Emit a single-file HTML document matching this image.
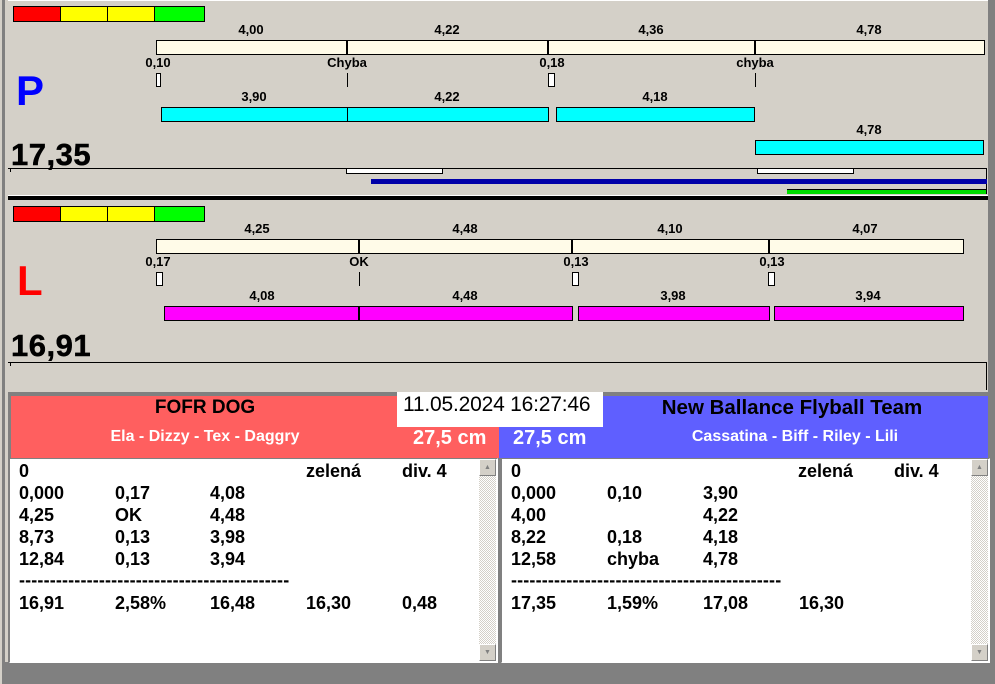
<!DOCTYPE html>
<html><head><meta charset="utf-8"><style>
*{margin:0;padding:0;box-sizing:border-box}
body{width:995px;height:684px;overflow:hidden;background:#808080;font-family:"Liberation Sans",Arial,sans-serif;position:relative}
.a{position:absolute}
.lb{position:absolute;font-size:13px;font-weight:bold;color:#000;transform:translateX(-50%);white-space:nowrap;line-height:14px}
.bar{position:absolute;border:1px solid #000}
.cr{background:#fffbe8}
.cy{background:#00ffff}
.mg{background:#ff00ff}
.sm{position:absolute;background:#fff;border:1px solid #000;width:7px;height:14px}
.tk{position:absolute;width:1px;height:14px;background:#000}
.vd{position:absolute;width:2px;background:#000}
.t{position:absolute;font-size:18px;font-weight:bold;line-height:22px;white-space:nowrap}
.sb{position:absolute;width:17px;background:repeating-conic-gradient(#fff 0 25%,#d4d0c8 0 50%) 0 0/2px 2px}
.sbb{position:absolute;left:0;width:17px;height:17px;background:#d4d0c8;border:1px solid;border-color:#fff #808080 #808080 #fff;font-size:7px;color:#808080;text-align:center;line-height:15px}
.big{position:absolute;font-size:31px;font-weight:bold;line-height:34px;letter-spacing:0.5px;-webkit-text-stroke:0.5px #000}
</style></head><body>
<div class="a" style="left:0;top:0;width:2px;height:684px;background:#d4d0c8"></div>
<div class="a" style="left:5px;top:0;width:3px;height:662px;background:#d4d0c8"></div>
<div class="a" style="left:8px;top:0;width:980px;height:392px;background:#d4d0c8"></div>
<div class="a" style="left:8px;top:0;width:980px;height:6px;background:#d4d0c8;border-top:1px solid #fff"></div>

<div class="a" style="left:13px;top:6px;width:192px;height:16px;border:1px solid #000;display:flex">
<div style="width:47px;background:#f00;border-right:1px solid #000"></div><div style="width:47px;background:#ff0;border-right:1px solid #000"></div><div style="width:47px;background:#ff0;border-right:1px solid #000"></div><div style="flex:1;background:#0f0"></div></div>
<div class="a" style="left:16px;top:68px;font-size:42px;font-weight:bold;color:#0000ff;line-height:46px">P</div>
<div class="big" style="left:11px;top:138px">17,35</div>

<div class="lb" style="left:251px;top:23px">4,00</div>
<div class="lb" style="left:447px;top:23px">4,22</div>
<div class="lb" style="left:651px;top:23px">4,36</div>
<div class="lb" style="left:869px;top:23px">4,78</div>
<div class="bar cr" style="left:156px;top:40px;width:829px;height:15px"></div>
<div class="vd" style="left:346px;top:40px;height:15px"></div>
<div class="vd" style="left:547px;top:40px;height:15px"></div>
<div class="vd" style="left:754px;top:40px;height:15px"></div>
<div class="lb" style="left:158px;top:56px">0,10</div>
<div class="lb" style="left:347px;top:56px">Chyba</div>
<div class="lb" style="left:552px;top:56px">0,18</div>
<div class="lb" style="left:755px;top:56px">chyba</div>
<div class="sm" style="left:156px;top:73px;width:5px"></div>
<div class="tk" style="left:347px;top:73px"></div>
<div class="sm" style="left:548px;top:73px"></div>
<div class="tk" style="left:755px;top:73px"></div>
<div class="lb" style="left:254px;top:90px">3,90</div>
<div class="lb" style="left:447px;top:90px">4,22</div>
<div class="lb" style="left:655px;top:90px">4,18</div>
<div class="bar cy" style="left:161px;top:107px;width:388px;height:15px"></div>
<div class="tk" style="left:347px;top:107px;height:15px"></div>
<div class="bar cy" style="left:556px;top:107px;width:199px;height:15px"></div>
<div class="lb" style="left:869px;top:123px">4,78</div>
<div class="bar cy" style="left:755px;top:140px;width:229px;height:15px"></div>

<div class="a" style="left:8px;top:168px;width:979px;height:1px;background:#000"></div>
<div class="a" style="left:10px;top:168px;width:1px;height:4px;background:#000"></div>
<div class="a" style="left:986px;top:168px;width:1px;height:26px;background:#000"></div>
<div class="a" style="left:346px;top:168px;width:97px;height:6px;background:#fff;border:1px solid #000"></div>
<div class="a" style="left:757px;top:168px;width:97px;height:6px;background:#fff;border:1px solid #000"></div>
<div class="a" style="left:371px;top:179px;width:616px;height:5px;background:#0000a8"></div>
<div class="a" style="left:787px;top:189px;width:199px;height:5px;background:#00dd00;border-top:1px solid #000"></div>
<div class="a" style="left:8px;top:195px;width:980px;height:1px;background:#fff"></div>
<div class="a" style="left:8px;top:196px;width:980px;height:4px;background:#000"></div>

<div class="a" style="left:13px;top:206px;width:192px;height:16px;border:1px solid #000;display:flex">
<div style="width:47px;background:#f00;border-right:1px solid #000"></div><div style="width:47px;background:#ff0;border-right:1px solid #000"></div><div style="width:47px;background:#ff0;border-right:1px solid #000"></div><div style="flex:1;background:#0f0"></div></div>
<div class="a" style="left:17px;top:258px;font-size:42px;font-weight:bold;color:#ff0000;line-height:46px">L</div>
<div class="big" style="left:11px;top:329px">16,91</div>

<div class="lb" style="left:257px;top:222px">4,25</div>
<div class="lb" style="left:465px;top:222px">4,48</div>
<div class="lb" style="left:670px;top:222px">4,10</div>
<div class="lb" style="left:865px;top:222px">4,07</div>
<div class="bar cr" style="left:156px;top:239px;width:808px;height:15px"></div>
<div class="vd" style="left:358px;top:239px;height:15px"></div>
<div class="vd" style="left:571px;top:239px;height:15px"></div>
<div class="vd" style="left:768px;top:239px;height:15px"></div>
<div class="lb" style="left:158px;top:255px">0,17</div>
<div class="lb" style="left:359px;top:255px">OK</div>
<div class="lb" style="left:576px;top:255px">0,13</div>
<div class="lb" style="left:772px;top:255px">0,13</div>
<div class="sm" style="left:156px;top:272px"></div>
<div class="tk" style="left:359px;top:272px"></div>
<div class="sm" style="left:572px;top:272px"></div>
<div class="sm" style="left:768px;top:272px"></div>
<div class="lb" style="left:262px;top:289px">4,08</div>
<div class="lb" style="left:465px;top:289px">4,48</div>
<div class="lb" style="left:673px;top:289px">3,98</div>
<div class="lb" style="left:868px;top:289px">3,94</div>
<div class="bar mg" style="left:164px;top:306px;width:409px;height:15px"></div>
<div class="vd" style="left:358px;top:306px;height:15px"></div>
<div class="bar mg" style="left:578px;top:306px;width:192px;height:15px"></div>
<div class="bar mg" style="left:774px;top:306px;width:190px;height:15px"></div>
<div class="a" style="left:8px;top:362px;width:979px;height:1px;background:#000"></div>
<div class="a" style="left:10px;top:362px;width:1px;height:4px;background:#000"></div>
<div class="a" style="left:986px;top:362px;width:1px;height:28px;background:#000"></div>

<div class="a" style="left:11px;top:396px;width:488px;height:62px;background:#ff5f5f"></div>
<div class="a" style="left:499px;top:396px;width:489px;height:62px;background:#5f5fff"></div>
<div class="a" style="left:11px;top:397px;width:388px;text-align:center;font-size:19px;font-weight:bold;line-height:22px">FOFR DOG</div>
<div class="a" style="left:11px;top:427px;width:388px;text-align:center;font-size:16px;font-weight:bold;color:#fff;line-height:19px">Ela - Dizzy - Tex - Daggry</div>
<div class="a" style="left:397px;top:392px;width:206px;height:35px;background:#fff"></div>
<div class="a" style="left:403px;top:392px;font-size:21px;line-height:25px;letter-spacing:-0.2px">11.05.2024 16:27:46</div>
<div class="a" style="left:413px;top:427px;font-size:20px;font-weight:bold;color:#fff;line-height:23px">27,5 cm</div>
<div class="a" style="left:513px;top:427px;font-size:20px;font-weight:bold;color:#fff;line-height:23px">27,5 cm</div>
<div class="a" style="left:598px;top:396px;width:388px;text-align:center;font-size:20.5px;font-weight:bold;line-height:24px">New Ballance Flyball Team</div>
<div class="a" style="left:598px;top:427px;width:394px;text-align:center;font-size:16px;font-weight:bold;color:#fff;line-height:19px">Cassatina - Biff - Riley - Lili</div>

<div class="a" style="left:9px;top:458px;width:489px;height:205px;background:#fff;border:1px solid;border-color:#808080 #fff #fff #808080"></div>
<div class="a" style="left:501px;top:458px;width:489px;height:205px;background:#fff;border:1px solid;border-color:#808080 #fff #fff #808080"></div>
<div class="sb" style="left:479px;top:459px;height:202px"><div class="sbb" style="top:0">▲</div><div class="sbb" style="top:185px">▼</div></div>
<div class="sb" style="left:971px;top:459px;height:202px"><div class="sbb" style="top:0">▲</div><div class="sbb" style="top:185px">▼</div></div>

<div class="t" style="left:19px;top:460px">0</div><div class="t" style="left:306px;top:460px">zelená</div><div class="t" style="left:402px;top:460px">div. 4</div>
<div class="t" style="left:19px;top:482px">0,000</div><div class="t" style="left:115px;top:482px">0,17</div><div class="t" style="left:210px;top:482px">4,08</div>
<div class="t" style="left:19px;top:504px">4,25</div><div class="t" style="left:115px;top:504px">OK</div><div class="t" style="left:210px;top:504px">4,48</div>
<div class="t" style="left:19px;top:526px">8,73</div><div class="t" style="left:115px;top:526px">0,13</div><div class="t" style="left:210px;top:526px">3,98</div>
<div class="t" style="left:19px;top:548px">12,84</div><div class="t" style="left:115px;top:548px">0,13</div><div class="t" style="left:210px;top:548px">3,94</div>
<div class="t" style="left:19px;top:569px;letter-spacing:0.15px">--------------------------------------------</div>
<div class="t" style="left:19px;top:592px">16,91</div><div class="t" style="left:115px;top:592px">2,58%</div><div class="t" style="left:210px;top:592px">16,48</div><div class="t" style="left:306px;top:592px">16,30</div><div class="t" style="left:402px;top:592px">0,48</div>

<div class="t" style="left:511px;top:460px">0</div><div class="t" style="left:798px;top:460px">zelená</div><div class="t" style="left:894px;top:460px">div. 4</div>
<div class="t" style="left:511px;top:482px">0,000</div><div class="t" style="left:607px;top:482px">0,10</div><div class="t" style="left:703px;top:482px">3,90</div>
<div class="t" style="left:511px;top:504px">4,00</div><div class="t" style="left:703px;top:504px">4,22</div>
<div class="t" style="left:511px;top:526px">8,22</div><div class="t" style="left:607px;top:526px">0,18</div><div class="t" style="left:703px;top:526px">4,18</div>
<div class="t" style="left:511px;top:548px">12,58</div><div class="t" style="left:607px;top:548px">chyba</div><div class="t" style="left:703px;top:548px">4,78</div>
<div class="t" style="left:511px;top:569px;letter-spacing:0.15px">--------------------------------------------</div>
<div class="t" style="left:511px;top:592px">17,35</div><div class="t" style="left:607px;top:592px">1,59%</div><div class="t" style="left:703px;top:592px">17,08</div><div class="t" style="left:799px;top:592px">16,30</div>
</body></html>
